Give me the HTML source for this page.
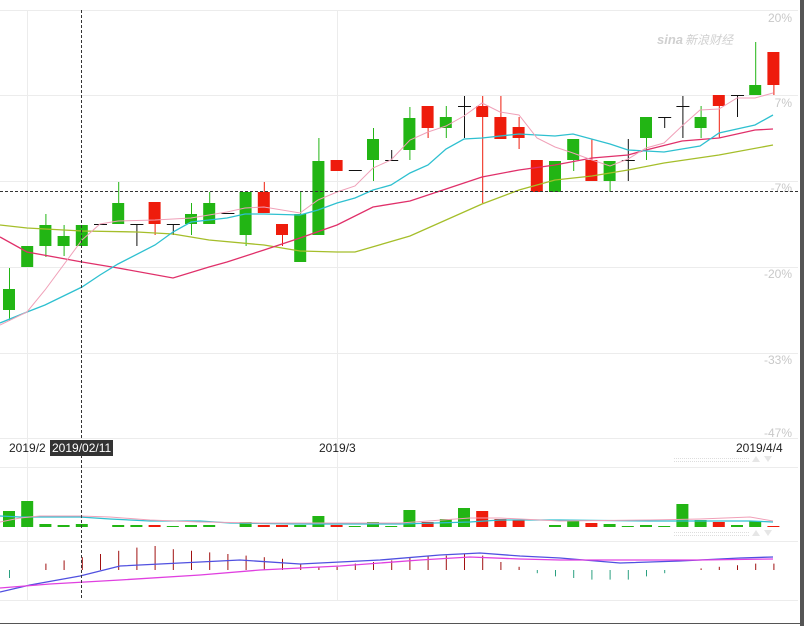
<!DOCTYPE html>
<html><head><meta charset="utf-8"><style>
html,body{margin:0;padding:0;background:#fff;width:804px;height:626px;overflow:hidden;font-family:"Liberation Sans","Noto Sans CJK SC",sans-serif}
svg{position:absolute;left:0;top:0}
</style></head><body>
<svg id="s" width="804" height="626" xmlns="http://www.w3.org/2000/svg">
<g stroke="#ececec" stroke-width="1">
<line x1="0" y1="10.5" x2="798" y2="10.5"/><line x1="0" y1="95.5" x2="798" y2="95.5"/>
<line x1="0" y1="181.5" x2="798" y2="181.5"/><line x1="0" y1="267.5" x2="798" y2="267.5"/>
<line x1="0" y1="353.5" x2="798" y2="353.5"/><line x1="0" y1="438.5" x2="798" y2="438.5"/>
<line x1="0" y1="467.5" x2="798" y2="467.5"/><line x1="0" y1="541.5" x2="798" y2="541.5"/>
<line x1="0" y1="600.5" x2="798" y2="600.5"/>
<line x1="27.5" y1="10" x2="27.5" y2="600"/><line x1="337.5" y1="10" x2="337.5" y2="600"/>
</g>
<g fill="#c8c8c8" font-size="12" text-anchor="end">
<text x="792" y="22">20%</text><text x="792" y="107">7%</text><text x="792" y="192">-7%</text>
<text x="792" y="278">-20%</text><text x="792" y="364">-33%</text><text x="792" y="437">-47%</text>
</g>
<text x="657" y="44" fill="#d0d0d0" font-size="13" font-style="italic" font-weight="bold">sina</text>
<text x="685" y="44" fill="#d0d0d0" font-size="12" font-style="italic">新浪财经</text>
<g id="g"></g>
<line x1="0" y1="191.5" x2="798" y2="191.5" stroke="#333" stroke-dasharray="3,2"/>
<line x1="81.5" y1="10" x2="81.5" y2="600" stroke="#333" stroke-dasharray="3,2"/>
<g font-size="12" fill="#222">
<text x="9" y="452">2019/2</text><text x="319" y="452">2019/3</text><text x="736" y="452">2019/4/4</text>
</g>
<rect x="50" y="440" width="63" height="16" fill="#333"/>
<text x="52" y="452" font-size="12" fill="#fff">2019/02/11</text>
<g stroke="#ddd" stroke-dasharray="1,1"><line x1="674" y1="458.5" x2="750" y2="458.5"/><line x1="674" y1="461.5" x2="750" y2="461.5"/>
<line x1="674" y1="532.5" x2="750" y2="532.5"/><line x1="674" y1="535.5" x2="750" y2="535.5"/></g>
<g fill="#e6e6e6"><path d="M752 462l4-6 4 6z"/><path d="M764 456l4 6 4-6z"/><path d="M752 536l4-6 4 6z"/><path d="M764 530l4 6 4-6z"/></g>
<rect x="800" y="0" width="4" height="626" fill="#555"/>
<line x1="0" y1="623.5" x2="800" y2="623.5" stroke="#555"/>
</svg>
<script>
var G='#22b514',R='#ee1c0c',K='#111';
var c=[[G,289,310,268,321],[G,246,267,246,267],[G,225,246,214,257],[G,236,246,225,256],[G,225,246,225,246],[K,224,224,224,224],[G,203,224,182,224],[K,224,224,224,246],[R,202,224,202,235],[K,224,224,224,235],[G,214,224,203,235],[G,203,224,192,224],[K,213,213,213,213],[G,192,235,192,246],[R,192,213,182,213],[R,224,235,224,246],[G,214,262,192,262],[G,161,235,138,235],[R,160,171,160,171],[K,170,170,170,170],[G,139,160,128,181],[K,160,160,150,160],[G,118,150,107,160],[R,106,128,106,138],[G,117,128,106,138],[K,106,106,96,138],[R,106,117,96,203],[R,117,139,96,139],[R,127,138,117,149],[R,160,192,160,192],[G,161,192,161,192],[G,139,160,139,171],[R,160,181,139,181],[G,161,181,161,192],[K,160,160,139,181],[G,117,138,117,160],[K,117,117,117,128],[K,106,106,96,138],[G,117,128,106,138],[R,95,106,95,138],[K,95,95,95,117],[G,85,95,42,95],[R,52,85,52,95]];
var vol=[16,26,3,2,3,0,2,2,2,1,2,2,0,5,2,2,2,11,2,1,5,1,17,5,8,19,16,8,7,0,2,6,4,3,1,2,1,23,7,5,2,6,1];
var macd=[-5,0,4,6,8,10,12,14,15,13,12,11,10,9,8,7,4,2,2,4,5,6,8,9,9,10,9,5,2,-2,-4,-5,-6,-6,-6,-4,-2,0,1,2,3,4,4];
var h='';
function X(i){return 9+i*18.2;}
c.forEach(function(d,i){var x=X(i);var col=d[0];
 h+='<line x1="'+(x+.5)+'" y1="'+d[3]+'" x2="'+(x+.5)+'" y2="'+d[4]+'" stroke="'+col+'"/>';
 if(col==K)h+='<line x1="'+(x-6)+'" y1="'+(d[1]+.5)+'" x2="'+(x+7)+'" y2="'+(d[1]+.5)+'" stroke="'+K+'"/>';
 else h+='<rect x="'+(x-6)+'" y="'+d[1]+'" width="12" height="'+Math.max(d[2]-d[1],2)+'" fill="'+col+'"/>';
 var v=vol[i];if(v){var vc=col==K?G:col;h+='<rect x="'+(x-6)+'" y="'+(527-v)+'" width="12" height="'+v+'" fill="'+vc+'"/>';}
 var m=macd[i];h+='<line x1="'+(x+.5)+'" y1="570" x2="'+(x+.5)+'" y2="'+(570-m*1.6)+'" stroke="'+(m>=0?'#a01010':'#2aa080')+'"/>';
});
function pl(p,col,w){h+='<polyline fill="none" stroke="'+col+'" stroke-width="'+(w||1.3)+'" points="'+p+'"/>';}
pl('0,225 27,228 82,231 137,232 173,234 209,240 264,245 300,251 337,252 355,252 410,236 482,204 519,190 555,180 592,176 628,170 664,163 719,155 773,145','#a5be2a');
pl('0,237 27,252 82,262 118,268 173,278 209,267 227,262 264,250 300,238 337,225 373,207 410,201 446,189 482,177 519,170 555,165 592,158 628,155 646,150 682,141 719,138 755,130 773,129','#e0306a');
pl('0,323 27,312 45,305 82,287 100,275 118,264 155,245 173,232 191,222 209,220 227,218 245,214 264,214 300,215 318,210 337,203 355,198 373,190 391,185 410,173 428,165 446,149 464,139 482,138 519,134 555,136 573,134 610,144 628,150 664,152 700,146 719,133 755,125 773,115','#2ec0d0');
pl('0,325 27,312 45,290 82,240 100,224 118,221 155,220 191,218 227,212 245,208 264,207 300,213 318,200 337,192 355,186 373,168 391,160 410,140 428,132 446,126 464,116 482,103 500,112 519,115 537,138 555,147 573,153 592,160 610,166 628,159 646,148 664,143 682,126 700,110 719,109 737,98 755,98 773,93','#f0a0b8',1);
pl('0,516 20,517 40,517 80,517 110,519 150,521 180,521 200,521 230,523 300,524 400,524 470,522 500,520 560,520 650,521 700,521 750,521 773,522','#2ec0d0');
pl('0,522 20,518 40,516 80,516 110,517 150,520 200,522 260,523 400,523 470,518 500,518 560,521 650,520 700,519 750,517 773,521','#f0a0b8',1);
pl('0,592 30,585 80,576 120,566 160,564 240,560 300,564 380,560 440,555 480,553 520,556 560,558 620,563 680,561 740,558 773,557','#5050e0');
pl('0,588 50,584 120,580 200,575 260,570 340,566 420,560 470,557 520,559 560,560 640,560 700,560 773,559','#e040e0');
document.getElementById('g').innerHTML=h;
</script>
</body></html>
